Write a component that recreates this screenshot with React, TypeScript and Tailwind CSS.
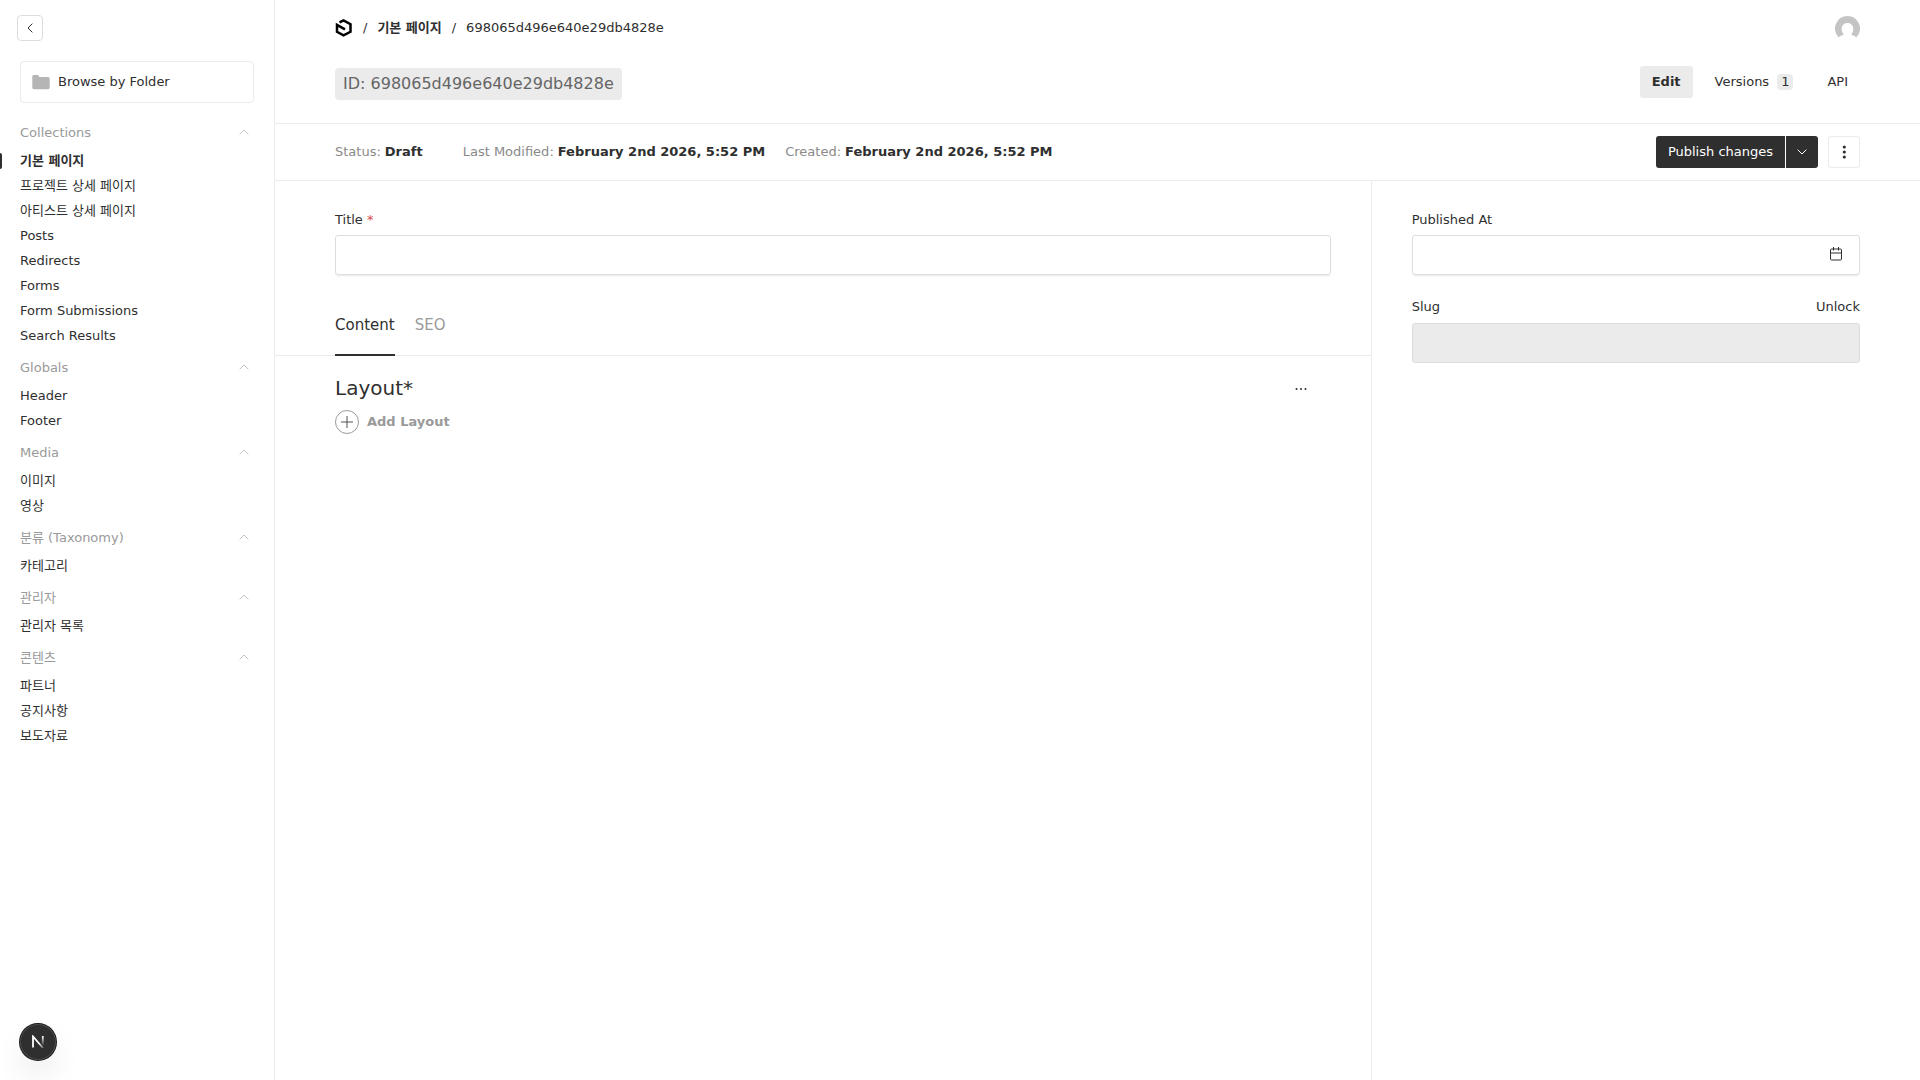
import React from "react";

type Item = { label: string; active?: boolean };
type Group = { label: string; items: Item[] };

const groups: Group[] = [
  {
    label: "Collections",
    items: [
      { label: "기본 페이지", active: true },
      { label: "프로젝트 상세 페이지" },
      { label: "아티스트 상세 페이지" },
      { label: "Posts" },
      { label: "Redirects" },
      { label: "Forms" },
      { label: "Form Submissions" },
      { label: "Search Results" },
    ],
  },
  { label: "Globals", items: [{ label: "Header" }, { label: "Footer" }] },
  { label: "Media", items: [{ label: "이미지" }, { label: "영상" }] },
  { label: "분류 (Taxonomy)", items: [{ label: "카테고리" }] },
  { label: "관리자", items: [{ label: "관리자 목록" }] },
  {
    label: "콘텐츠",
    items: [{ label: "파트너" }, { label: "공지사항" }, { label: "보도자료" }],
  },
];

function Chevron({ className }: { className?: string }) {
  return (
    <svg className={className} width="20" height="20" viewBox="0 0 20 20" fill="none" stroke="currentColor" aria-hidden="true">
      <path d="M14 8L10 12L6 8" strokeLinecap="square" />
    </svg>
  );
}

function NavGroup({ group }: { group: Group }) {
  return (
    <section>
      <button type="button" className="mb-[3px] flex h-[25px] w-full items-center justify-between text-left text-[#9a9a9a]">
        <span>{group.label}</span>
        <Chevron className="mb-px rotate-180 text-[#c4c4c4]" />
      </button>
      <ul>
        {group.items.map((item) => (
          <li key={item.label} className="relative">
            {item.active && <span className="absolute top-[5px] -left-5 h-4 w-0.5 rounded-r-sm bg-[#2f2f2f]" />}
            <a href="#" className={item.active ? "block leading-[25px] font-semibold" : "block leading-[25px]"}>
              {item.label}
            </a>
          </li>
        ))}
      </ul>
    </section>
  );
}

function Sidebar() {
  return (
    <aside className="w-[275px] shrink-0 border-r border-[#ebebeb] pt-[15px]">
      <button type="button" aria-label="Close menu" className="ml-[17px] flex size-[26px] items-center justify-center rounded border border-[#dddddd]">
        <Chevron className="rotate-90" />
      </button>
      <nav className="px-5 pt-5">
        <a href="#" className="flex h-[42px] items-center gap-[7px] rounded border border-[#ebebeb] pl-[10px]">
          <svg width="20" height="20" viewBox="0 0 20 20" fill="#b5b5b5" aria-hidden="true">
            <path d="M1.300 4.600c0-1 .7-1.700 1.700-1.700h3.300c.6 0 1 .3 1.300.7l.7 1.100c.2.3.5.4.9.4h7.600c1.100 0 1.900.8 1.900 1.800v8.500c0 1-.8 1.800-1.800 1.800H3.100c-1 0-1.800-.8-1.800-1.800z" />
          </svg>
          Browse by Folder
        </a>
        <div className="mt-[17px] flex flex-col gap-[7px]">
          {groups.map((g) => (
            <NavGroup key={g.label} group={g} />
          ))}
        </div>
      </nav>
    </aside>
  );
}

function Header() {
  return (
    <header className="border-b border-[#ebebeb] px-[60px]">
      <div className="flex h-14 items-center justify-between">
        <nav aria-label="Breadcrumb" className="flex items-center gap-[10px]">
          <a href="#" aria-label="Dashboard">
            <svg width="18" height="20" viewBox="0 0 18 20" fill="none" stroke="#000" strokeWidth="2.5" aria-hidden="true">
              <path d="M4.500 4.300L8.500 2.400L15.500 6.200V13.800L8.500 17.400L2 13.800V6.800L10 11.400" />
            </svg>
          </a>
          <span>/</span>
          <a href="#" className="font-semibold">기본 페이지</a>
          <span>/</span>
          <span>698065d496e640e29db4828e</span>
        </nav>
        <a href="#" aria-label="Account">
          <svg width="25" height="25" viewBox="0 0 25 25" aria-hidden="true">
            <path
              fill="#c4c4c4"
              d="M12.5 0a12.5 12.5 0 0 1 8.7 21.4c-.7-1.2-2.2-2-4.3-2.5-.5-.2-.6-.8-.2-1.2a6.3 6.3 0 0 0 1.6-4.6c0-3.8-2.4-6.2-5.8-6.2s-5.8 2.4-5.8 6.2c0 1.9.6 3.4 1.6 4.6.4.4.3 1-.2 1.2-2.1.5-3.6 1.3-4.3 2.500A12.5 12.5 0 0 1 12.5 0z"
            />
          </svg>
        </a>
      </div>
      <div className="flex items-start justify-between pt-[10px] pb-[23px]">
        <h1 className="mt-[2px] rounded bg-[#ebebeb] px-2 text-base leading-8 text-[#656565]">ID: 698065d496e640e29db4828e</h1>
        <nav aria-label="Document views" className="flex gap-[10px]">
          <a href="#" className="rounded-[3px] bg-[#ebebeb] px-3 leading-8 font-semibold">Edit</a>
          <a href="#" className="flex items-center gap-2 rounded-[3px] px-3 leading-8">
            Versions
            <span className="rounded-sm bg-[#ebebeb] px-1 leading-4">1</span>
          </a>
          <a href="#" className="px-3 leading-8">API</a>
        </nav>
      </div>
    </header>
  );
}

function Meta({ label, value, className }: { label: string; value: string; className?: string }) {
  return (
    <li className={className}>
      <span className="mr-1 text-[#8a8a8a]">{label}:</span>
      <span className="font-semibold">{value}</span>
    </li>
  );
}

function Controls() {
  return (
    <div className="flex h-[57px] items-center justify-between border-b border-[#ebebeb] px-[60px]">
      <ul className="flex gap-5">
        <Meta label="Status" value="Draft" className="mr-5" />
        <Meta label="Last Modified" value="February 2nd 2026, 5:52 PM" />
        <Meta label="Created" value="February 2nd 2026, 5:52 PM" />
      </ul>
      <div className="flex">
        <button type="button" className="h-8 rounded-l-[3px] bg-[#2f2f2f] px-3 text-white">Publish changes</button>
        <button type="button" aria-label="More publish options" className="ml-px flex size-8 items-center justify-center rounded-r-[3px] bg-[#2f2f2f] text-white">
          <Chevron />
        </button>
        <button type="button" aria-label="Document actions" className="ml-[10px] flex size-8 items-center justify-center rounded-[3px] border border-[#ebebeb]">
          <svg width="4" height="14" viewBox="0 0 4 14" fill="currentColor" aria-hidden="true">
            <circle cx="2.300" cy="2" r="1.600" />
            <circle cx="2.300" cy="7" r="1.600" />
            <circle cx="2.300" cy="12" r="1.600" />
          </svg>
        </button>
      </div>
    </div>
  );
}

function MainFields() {
  return (
    <main className="border-r border-[#ebebeb]">
      <div className="pt-[29px] pr-10 pl-[60px]">
        <label htmlFor="title" className="mb-[5px] block">
          Title <span className="text-[#da4b48]">*</span>
        </label>
        <input id="title" type="text" className="block h-10 w-full rounded-[3px] border border-[#dddddd] px-[14px] shadow-[0_2px_2px_-1px_rgba(0,0,0,0.1)]" />
      </div>
      <div role="tablist" className="mt-[30px] flex gap-5 border-b border-[#ebebeb] pl-[60px] text-[15px]">
        <button type="button" role="tab" aria-selected="true" className="-mb-px h-[51px] border-b-2 border-[#2f2f2f] pb-[10px]">Content</button>
        <button type="button" role="tab" aria-selected="false" className="-mb-px h-[51px] pb-3 text-[#9a9a9a]">SEO</button>
      </div>
      <section className="pt-5 pr-10 pl-[60px]">
        <div className="flex items-center justify-between pr-5">
          <h2 className="text-xl leading-6">Layout*</h2>
          <button type="button" aria-label="Layout options" className="flex size-5 items-center justify-center">
            <svg width="14" height="4" viewBox="0 0 14 4" fill="currentColor" aria-hidden="true">
              <circle cx="2.500" cy="3" r="1" />
              <circle cx="7" cy="3" r="1" />
              <circle cx="11.500" cy="3" r="1" />
            </svg>
          </button>
        </div>
        <button type="button" className="mt-[10px] flex items-center gap-2 font-semibold text-[#9a9a9a]">
          <svg width="24" height="24" viewBox="0 0 24 24" fill="none" aria-hidden="true">
            <circle cx="12" cy="12" r="11.500" stroke="#9a9a9a" />
            <path d="M12 6v12M6 12h12" stroke="#515151" />
          </svg>
          Add Layout
        </button>
      </section>
    </main>
  );
}

function SideFields() {
  return (
    <aside className="pt-[29px] pr-[60px] pl-10">
      <label htmlFor="published" className="mb-[5px] block">Published At</label>
      <div className="flex h-10 items-center rounded-[3px] border border-[#dddddd] pr-[13px] shadow-[0_2px_2px_-1px_rgba(0,0,0,0.1)]">
        <input id="published" type="text" className="h-full min-w-0 flex-1 px-[14px] outline-none" />
        <svg width="20" height="20" viewBox="0 0 20 20" fill="none" stroke="currentColor" aria-hidden="true">
          <path d="M7.500 2v3.500M12.500 2v3.500M4.500 8h11M5.500 4h9a1 1 0 0 1 1 1v9a1 1 0 0 1-1 1h-9a1 1 0 0 1-1-1v-9a1 1 0 0 1 1-1z" />
        </svg>
      </div>
      <div className="mt-[22px] mb-[6px] flex justify-between">
        <label htmlFor="slug">Slug</label>
        <button type="button">Unlock</button>
      </div>
      <input id="slug" type="text" readOnly className="block h-10 w-full rounded-[3px] border border-[#dddddd] bg-[#ebebeb] px-[14px]" />
    </aside>
  );
}

export default function App() {
  return (
    <div className="flex min-h-screen bg-white font-['DejaVu_Sans','Noto_Sans_CJK_KR',sans-serif] text-[13px] leading-5 text-[#2f2f2f]">
      <Sidebar />
      <div className="flex min-w-0 flex-1 flex-col">
        <Header />
        <Controls />
        <div className="grid flex-1 grid-cols-[2fr_1fr]">
          <MainFields />
          <SideFields />
        </div>
      </div>
      <button
        type="button"
        aria-label="Open developer tools"
        className="fixed bottom-5 left-5 flex size-9 items-center justify-center rounded-full bg-[#2f2f2f] shadow-[0_0_0_1px_#171717,inset_0_0_0_1px_#4a4a4a,0_16px_32px_-8px_rgba(0,0,0,0.24)]"
      >
        <svg width="14" height="14" viewBox="0 0 14 14" fill="none" aria-hidden="true">
          <defs>
            <linearGradient id="diagonal" x1="8" y1="8" x2="12" y2="13" gradientUnits="userSpaceOnUse">
              <stop stopColor="#fff" />
              <stop offset="1" stopColor="#fff" stopOpacity="0.3" />
            </linearGradient>
            <linearGradient id="stem" x1="12" y1="1" x2="12" y2="10" gradientUnits="userSpaceOnUse">
              <stop stopColor="#fff" />
              <stop offset="1" stopColor="#fff" stopOpacity="0.1" />
            </linearGradient>
          </defs>
          <path d="M2 12.500V1.500L12 13" stroke="url(#diagonal)" strokeWidth="1.800" />
          <path d="M11.800 1v9" stroke="url(#stem)" strokeWidth="1.800" />
        </svg>
      </button>
    </div>
  );
}
